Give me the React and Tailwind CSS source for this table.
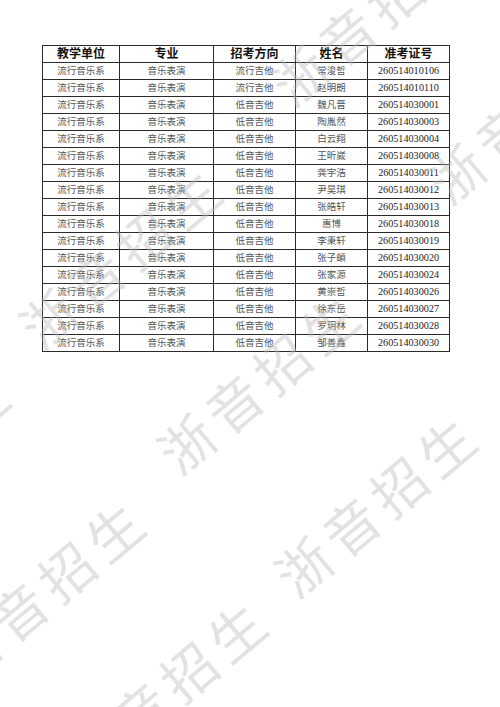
import React from "react";

const rows = [
  ["流行吉他", "常浚哲", "260514010106"],
  ["流行吉他", "赵明朗", "260514010110"],
  ["低音吉他", "魏凡晋", "260514030001"],
  ["低音吉他", "陶胤然", "260514030003"],
  ["低音吉他", "白云翔", "260514030004"],
  ["低音吉他", "王昕崴", "260514030008"],
  ["低音吉他", "龚宇浩", "260514030011"],
  ["低音吉他", "尹昊琪", "260514030012"],
  ["低音吉他", "张皓轩", "260514030013"],
  ["低音吉他", "惠博", "260514030018"],
  ["低音吉他", "李秉轩", "260514030019"],
  ["低音吉他", "张子頔", "260514030020"],
  ["低音吉他", "张家源", "260514030024"],
  ["低音吉他", "黄崇哲", "260514030026"],
  ["低音吉他", "徐东岳", "260514030027"],
  ["低音吉他", "罗玥林", "260514030028"],
  ["低音吉他", "邹善鑫", "260514030030"],
];

const headers = ["教学单位", "专业", "招考方向", "姓名", "准考证号"];

// watermark centres, measured off the scan
const marks = [
  "left-[377px] top-[503px]",
  "left-[260px] top-[380px]",
  "left-[45px] top-[588px]",
  "left-[167px] top-[688px]",
  "left-[122px] top-[255px]",
  "left-[373px] top-[12px]",
  "left-[530px] top-[110px]",
  "left-[-90px] top-[460px]",
];

const serif = "font-['Liberation_Serif','Noto_Sans_CJK_SC',serif]";

const Cell = ({ children, className = "" }) => (
  <div
    className={`h-[17px] flex items-center justify-center border-r border-b border-[#2b2b2b] whitespace-nowrap ${className}`}
  >
    {children}
  </div>
);

export default function App() {
  return (
    <div className={`relative w-[500px] h-[707px] overflow-hidden bg-white ${serif}`}>
      <div className="pt-[45px] pl-[42px]">
        <div className="grid w-fit grid-cols-[77px_94px_82px_72px_82px] border-l border-t border-[#2b2b2b]">
          {headers.map((h) => (
            <Cell key={h} className="text-[12px] font-bold text-[#111]">
              {h}
            </Cell>
          ))}
          {rows.map(([dir, name, id]) => (
            <React.Fragment key={id}>
              <Cell className="text-[9.5px] text-[#555]">流行音乐系</Cell>
              <Cell className="text-[9.5px] text-[#555]">音乐表演</Cell>
              <Cell className="text-[9.5px] text-[#555]">{dir}</Cell>
              <Cell className="text-[9.5px] text-[#555]">{name}</Cell>
              <Cell className="text-[10.2px] text-[#222]">{id}</Cell>
            </React.Fragment>
          ))}
        </div>
      </div>

      {marks.map((pos) => (
        <span
          key={pos}
          className={`pointer-events-none absolute ${pos} -translate-x-1/2 -translate-y-1/2 rotate-[-40deg] whitespace-nowrap font-['Noto_Sans_CJK_SC',sans-serif] text-[54px] leading-none tracking-[8px] text-[#b8b8b8] opacity-40`}
        >
          浙音招生
        </span>
      ))}
    </div>
  );
}
